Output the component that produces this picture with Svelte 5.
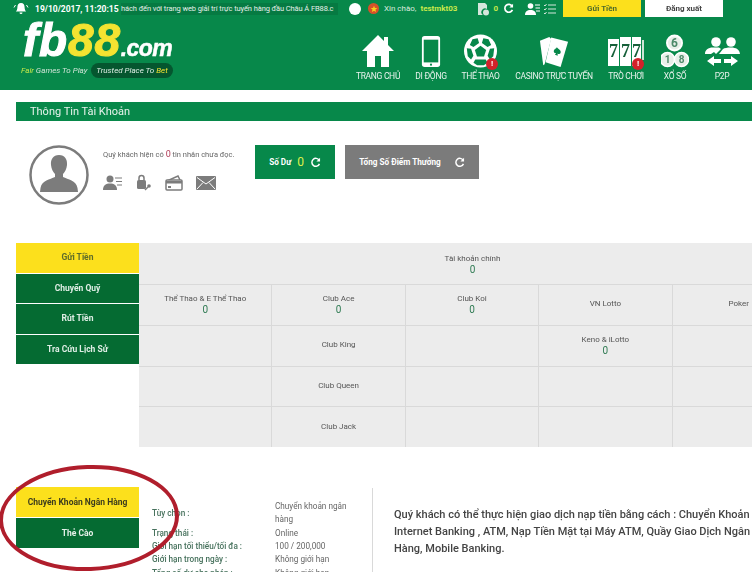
<script lang="ts">
  const nav = [
    { id: 'home', label: 'TRANG CHỦ', w: 46 },
    { id: 'phone', label: 'DI ĐỘNG', w: 32 },
    { id: 'ball', label: 'THỂ THAO', w: 39, alert: true },
    { id: 'cards', label: 'CASINO TRỰC TUYẾN', w: 80 },
    { id: 'slots', label: 'TRÒ CHƠI', w: 36, alert: true },
    { id: 'lotto', label: 'XỔ SỐ', w: 24 },
    { id: 'p2p', label: 'P2P', w: 16 },
  ]
  const sideTabs = ['Gửi Tiền', 'Chuyển Quỹ', 'Rút Tiền', 'Tra Cứu Lịch Sử']
  const cells = [
    { name: 'Thể Thao & E Thể Thao', val: '0' },
    { name: 'Club Ace', val: '0' },
    { name: 'Club Koi', val: '0' },
    { name: 'VN Lotto' },
    { name: 'Poker' },
    { name: '' },
    { name: 'Club King' },
    { name: '' },
    { name: 'Keno & iLotto', val: '0' },
    { name: '' },
    { name: '' },
    { name: 'Club Queen' },
    { name: '' },
    { name: '' },
    { name: '' },
    { name: '' },
    { name: 'Club Jack' },
    { name: '' },
    { name: '' },
    { name: '' },
  ]
  const details = [
    ['Tùy chọn :', 'Chuyển khoản ngân hàng'],
    ['Trạng thái :', 'Online'],
    ['Giới hạn tối thiểu/tối đa :', '100 / 200,000'],
    ['Giới hạn trong ngày :', 'Không giới hạn'],
    ['Tổng số dư cho phép :', 'Không giới hạn'],
  ]
</script>

<div class="page">
  <header class="header">
    <div class="topbar">
      <svg class="bell" viewBox="0 0 16 14" width="16" height="14">
        <path d="M8 1c-2.600 0-3.600 2-3.600 4.400 0 2-.8 3.200-1.600 4.200h10.400c-.8-1-1.600-2.200-1.600-4.200C11.600 3 10.600 1 8 1zM6.500 10.500a1.500 1.500 0 0 0 3 0z" fill="#fff"/>
        <path d="M2.500 3 1 5.500M13.500 3 15 5.500" stroke="#fff" fill="none"/>
      </svg>
      <span class="date">19/10/2017, 11:20:15</span>
      <div class="ticker">hách đến với trang web giải trí trực tuyến hàng đầu Châu Á FB88.c</div>
      <span class="dot"></span>
      <span class="flag"><svg viewBox="0 0 12 12" width="8" height="8"><path d="M6 1l1.400 3.400 3.600.2-2.800 2.300.9 3.500L6 8.500 2.900 10.400l.9-3.500L1 4.600l3.600-.2z" fill="#f7d21e"/></svg></span>
      <span class="hello">Xin chào,</span>
      <span class="user">testmkt03</span>
      <svg class="ic-coin" viewBox="0 0 12 14" width="12" height="14">
        <path d="M1 1h7l2 2v4a3.500 3.500 0 0 0-4 6H1z" fill="#d5e6dc"/>
        <circle cx="9" cy="10.500" r="3" fill="#d5e6dc"/>
      </svg>
      <span class="zero">0</span>
      <svg class="ic-refresh" viewBox="0 0 12 12" width="11" height="11">
        <path d="M10 3.500A4.300 4.300 0 1 0 10.300 7.500" fill="none" stroke="#fff" stroke-width="1.800"/>
        <path d="M11 .8v4H7z" fill="#fff"/>
      </svg>
      <svg class="ic-user" viewBox="0 0 15 12" width="15" height="12">
        <circle cx="5.500" cy="3" r="2.800" fill="#fff"/>
        <path d="M0 12c0-3.500 2-5 5.500-5s5.500 1.500 5.500 5z" fill="#fff"/>
        <path d="M10 2h5M10.500 5h4.500M11 8h4" stroke="#fff"/>
      </svg>
      <svg class="ic-list" viewBox="0 0 12 12" width="12" height="12">
        <path d="M0 2l1 1 1.500-2M0 6l1 1 1.500-2M0 10l1 1 1.500-2M4 2h8M4 6h8M4 10h8" stroke="#d5e6dc" fill="none"/>
      </svg>
      <button class="btn-deposit">Gửi Tiền</button>
      <button class="btn-logout">Đăng xuất</button>
    </div>

    <div class="mainbar">
      <div class="logo">
        <div class="wordmark"><span class="fb">fb</span><span class="eights">88</span><span class="com">.com</span></div>
        <div class="tagline">
          <span><b>Fair</b> Games To Play</span>
          <span class="pill">Trusted Place To <i>Bet</i></span>
        </div>
      </div>

      <nav class="nav">
        {#each nav as item}
          <div class="nav-item nav-{item.id}" style="width: {item.w}px">
            <div class="nav-icon">
              {#if item.id === 'home'}
                <svg viewBox="0 0 34 34" width="34" height="34">
                  <path d="M17 1 1 17h5v16h8V22h6v11h8V17h5l-6-6V3h-4v4z" fill="#fff"/>
                </svg>
              {:else if item.id === 'phone'}
                <svg viewBox="0 0 22 36" width="20" height="33">
                  <rect x="1" y="1" width="20" height="34" rx="3" fill="#fff"/>
                  <rect x="3" y="5" width="16" height="25" fill="#07884a"/>
                  <circle cx="11" cy="32.500" r="1.200" fill="#07884a"/>
                </svg>
              {:else if item.id === 'ball'}
                <svg viewBox="0 0 36 36" width="35" height="34">
                  <circle cx="18" cy="18" r="17.500" fill="#fff"/>
                  <path d="M18 12.500l6 4.400-2.300 7h-7.400l-2.300-7z" fill="#07884a"/>
                  <path d="M9.500 5.500 15 4.500l1.500 5-6 4.300-3.800-2.200zM26.500 5.500 21 4.500l-1.500 5 6 4.300 3.800-2.200z" fill="#07884a"/>
                  <path d="M3.500 15 8 15.500l2.500 7.500-2.500 4-3.500-3.500zM32.500 15 28 15.500 25.500 23l2.500 4 3.500-3.500z" fill="#07884a"/>
                  <path d="M12.500 27h11l2 3.500-4 2.500h-7l-4-2.500z" fill="#07884a"/>
                </svg>
              {:else if item.id === 'cards'}
                <svg viewBox="0 0 32 34" width="30" height="32">
                  <path d="M1 5 11 1l2 2-7 27-1.500 1z" fill="#fff"/>
                  <path d="M13 1.500 31 6l-8 27L7 28z" fill="#fff"/>
                  <path d="M19 12c2 2.500 5 3 4 6-.8 1.600-2.400 1.400-3.200.6l.2 2.400-3-1 1.200-2c-1.200.4-2.800-.6-2.400-2.400.6-2 2.600-1.800 3.200-3.600z" fill="#07884a"/>
                </svg>
              {:else if item.id === 'slots'}
                <svg viewBox="0 0 36 32" width="36" height="32">
                  <rect x="0" y="3" width="11" height="27" fill="#fff"/>
                  <rect x="12" y="1" width="11" height="29" fill="#fff"/>
                  <rect x="24" y="1" width="9" height="29" fill="#fff"/>
                  <rect x="34" y="4" width="2" height="20" fill="#cfe4d6"/>
                  <text x="5.500" y="21" class="seven">7</text>
                  <text x="17.500" y="21" class="seven">7</text>
                  <text x="28.500" y="21" class="seven">7</text>
                </svg>
              {:else if item.id === 'lotto'}
                <svg viewBox="0 0 28 34" width="28" height="34">
                  <circle cx="13.500" cy="9" r="8.500" fill="#fff"/>
                  <circle cx="13.500" cy="9" r="6.500" fill="#e8efe9"/>
                  <circle cx="6.500" cy="25.500" r="7" fill="#e8efe9" stroke="#fff" stroke-width="1.500"/>
                  <circle cx="20.500" cy="25.500" r="7" fill="#e8efe9" stroke="#fff" stroke-width="1.500"/>
                  <text x="13.500" y="13" class="ball-num big">6</text>
                  <text x="6.500" y="29" class="ball-num">1</text>
                  <text x="20.500" y="29" class="ball-num">8</text>
                </svg>
              {:else}
                <svg viewBox="0 0 36 31" width="36" height="31">
                  <circle cx="12" cy="5" r="4.800" fill="#fff"/>
                  <circle cx="27" cy="5" r="4.800" fill="#fff"/>
                  <path d="M1 17c0-4 3-6.500 8-6.500h6l2 1.500-5 5-2-2-3 2z" fill="#fff"/>
                  <path d="M19 12c1.500-1 4-1.500 8-1.500 5 0 8.500 2 9 6.500H15z" fill="#fff"/>
                  <path d="M10 19 3 24l7 5v-3h7v-4h-7zM27 19v3h-7v4h7v3l7-5z" fill="#fff"/>
                </svg>
              {/if}
              {#if item.alert}<span class="alert">!</span>{/if}
            </div>
            <span class="nav-label">{item.label}</span>
          </div>
        {/each}
      </nav>
    </div>
  </header>

  <h1 class="title">Thông Tin Tài Khoản</h1>

  <section class="profile">
    <svg class="avatar" viewBox="0 0 60 60" width="60" height="60">
      <circle cx="30" cy="30" r="28.500" fill="#fff" stroke="#7c7c7c" stroke-width="2.500"/>
      <path d="M30 10c-6 0-8.500 4.500-8 10 .4 4 2 7 4 9v3c-5 2.500-13 3-14.500 11l-.5 4h38l-.5-4C47 35 39 34.500 34 32v-3c2-2 3.600-5 4-9 .5-5.500-2-10-8-10z" fill="#7c7c7c"/>
    </svg>

    <div class="messages">
      <p class="unread">Quý khách hiện có <span class="count">0</span> tin nhắn chưa đọc.</p>
      <div class="tools">
        <svg viewBox="0 0 20 16" width="20" height="16">
          <circle cx="7" cy="4" r="3.500" fill="#7c7c7c"/>
          <path d="M0 15c0-5 3-6.500 7-6.500s7 1.500 7 6.500z" fill="#7c7c7c"/>
          <path d="M12 3h7M13 6.500h6M14 10h5" stroke="#7c7c7c" stroke-width="1.200"/>
        </svg>
        <svg viewBox="0 0 16 17" width="16" height="17">
          <rect x="1" y="6" width="9" height="9" rx="1.500" fill="#7c7c7c"/>
          <path d="M3 6V4a2.500 2.500 0 0 1 5 0v2" fill="none" stroke="#7c7c7c" stroke-width="1.500"/>
          <circle cx="13" cy="12" r="1.800" fill="#7c7c7c"/>
          <path d="M12 13l-3 3" stroke="#7c7c7c" stroke-width="1.500"/>
        </svg>
        <svg viewBox="0 0 18 16" width="18" height="16">
          <path d="M2 6 13 1l2 4" fill="none" stroke="#7c7c7c" stroke-width="1.500"/>
          <rect x="1" y="5" width="16" height="10" rx="1" fill="#fff" stroke="#7c7c7c" stroke-width="1.500"/>
          <rect x="1" y="6" width="16" height="2.500" fill="#7c7c7c"/>
          <rect x="3" y="11" width="3" height="2" fill="#7c7c7c"/>
        </svg>
        <svg viewBox="0 0 20 14" width="20" height="14">
          <rect width="20" height="14" rx="1" fill="#7c7c7c"/>
          <path d="M1 1.500 10 8l9-6.500M1 13l6-6.500M19 13l-6-6.500" fill="none" stroke="#fff" stroke-width="1"/>
        </svg>
      </div>
    </div>

    <div class="balance">
      <span>Số Dư</span>
      <span class="balance-val">0</span>
      <svg viewBox="0 0 12 12" width="11" height="11">
        <path d="M10 3.500A4.300 4.300 0 1 0 10.300 7.500" fill="none" stroke="#fff" stroke-width="1.600"/>
        <path d="M11 .8v4H7z" fill="#fff"/>
      </svg>
    </div>
    <div class="points">
      <span>Tổng Số Điểm Thưởng</span>
      <svg viewBox="0 0 12 12" width="11" height="11">
        <path d="M10 3.500A4.300 4.300 0 1 0 10.300 7.500" fill="none" stroke="#fff" stroke-width="1.600"/>
        <path d="M11 .8v4H7z" fill="#fff"/>
      </svg>
    </div>
  </section>

  <section class="wallet">
    <div class="side">
      {#each sideTabs as tab, i}
        <div class="side-tab" class:active={i === 0}>{tab}</div>
      {/each}
    </div>
    <div class="accounts">
      <div class="main-account">
        <span>Tài khoản chính</span>
        <span class="val">0</span>
      </div>
      <div class="grid">
        {#each cells as cell}
          <div class="cell">
            {#if cell.name}<span>{cell.name}</span>{/if}
            {#if cell.val}<span class="val">{cell.val}</span>{/if}
          </div>
        {/each}
      </div>
    </div>
  </section>

  <section class="deposit">
    <div class="methods">
      <div class="method active">Chuyển Khoản Ngân Hàng</div>
      <div class="method">Thẻ Cào</div>
    </div>
    <div class="details">
      {#each details as row}
        <span class="d-label">{row[0]}</span>
        <span class="d-value">{row[1]}</span>
      {/each}
    </div>
    <p class="note">Quý khách có thể thực hiện giao dịch nạp tiền bằng cách : Chuyển Khoản Internet Banking , ATM, Nạp Tiền Mặt tại Máy ATM, Quầy Giao Dịch Ngân Hàng, Mobile Banking.</p>

    <svg class="ring" viewBox="0 0 190 120" width="190" height="120">
      <ellipse cx="97" cy="58" rx="88" ry="51" transform="rotate(-2 97 58)" fill="none" stroke="#b01e2c" stroke-width="4"/>
    </svg>
  </section>
</div>

<style>
  :global(body) {
    margin: 0;
    background: #fff;
  }

  .page {
    position: relative;
    width: 752px;
    height: 572px;
    overflow: hidden;
    font-family: Roboto, "Liberation Sans", sans-serif;
    color: #555;
    /* the source capture is a soft jpeg */
    filter: blur(0.35px);
  }

  /* Header */
  .header {
    height: 90px;
    background: #07884a;
    color: #fff;
  }

  .topbar {
    display: flex;
    align-items: center;
    height: 17px;
    padding-left: 13px;
    font-size: 8px;
    white-space: nowrap;
  }

  .date {
    margin-left: 6px;
    width: 86px;
    font-weight: 700;
    font-size: 8.500px;
  }

  .ticker {
    width: 217px;
    height: 12px;
    line-height: 12px;
    overflow: hidden;
    background: #067a42;
    font-size: 7.500px;
    letter-spacing: -0.1px;
    color: #e4f0e8;
  }

  .dot {
    width: 12px;
    height: 12px;
    margin-left: 11px;
    border-radius: 50%;
    background: #fff;
  }

  .flag {
    display: flex;
    align-items: center;
    justify-content: center;
    width: 11px;
    height: 11px;
    margin-left: 7px;
    border-radius: 50%;
    background: #d4512a;
  }

  .hello {
    margin-left: 5px;
    font-size: 8px;
    color: #d8eadf;
  }

  .user {
    margin-left: 4px;
    font-weight: 700;
    color: #c8e84a;
  }

  .ic-coin {
    margin-left: 20px;
  }

  .zero {
    margin-left: 4px;
    color: #c8e84a;
    font-weight: 700;
  }

  .ic-refresh {
    margin-left: 5px;
  }

  .ic-user {
    margin-left: 11px;
  }

  .ic-list {
    margin-left: 4px;
  }

  .btn-deposit,
  .btn-logout {
    width: 78px;
    height: 17px;
    padding: 0;
    border: 0;
    font: 700 8px Roboto, sans-serif;
    color: #444;
  }

  .btn-deposit {
    margin-left: 7px;
    background: #fce01c;
    color: #4f6b2a;
  }

  .btn-logout {
    margin-left: 4px;
    background: #fff;
  }

  .mainbar {
    display: flex;
    justify-content: space-between;
    height: 73px;
  }

  /* Logo */
  .logo {
    padding: 0 0 0 21px;
  }

  .wordmark {
    display: flex;
    align-items: baseline;
    height: 46px;
    padding-left: 2px;
    font-family: "Liberation Sans", Arial, sans-serif;
    font-style: italic;
    font-weight: 700;
    line-height: 46px;
    -webkit-text-stroke: 1.100px currentColor;
  }

  .fb {
    font-size: 46px;
    letter-spacing: 0.8px;
  }

  .eights {
    font-size: 46px;
    letter-spacing: 0.8px;
    color: #f4e331;
  }

  .com {
    font-size: 23px;
    letter-spacing: -0.6px;
    -webkit-text-stroke: 0.5px currentColor;
  }

  .tagline {
    display: flex;
    align-items: center;
    gap: 4px;
    font-size: 8px;
    font-style: italic;
    color: #cfe4d6;
  }

  .tagline b {
    font-weight: 400;
    color: #c8e84a;
  }

  .pill {
    padding: 3px 5px;
    border-radius: 8px;
    background: #05562f;
    color: #dfeee5;
  }

  .pill i {
    color: #f4e331;
  }

  /* Nav */
  .nav {
    display: flex;
    gap: 14px;
    padding: 0 22px 0 0;
  }

  .nav-item {
    display: flex;
    flex-direction: column;
    align-items: center;
    flex-shrink: 0;
  }

  .nav-lotto {
    margin-left: 5px;
  }

  .nav-p2p {
    margin-left: 13px;
  }

  .nav-icon {
    position: relative;
    display: flex;
    align-items: flex-end;
    justify-content: center;
    box-sizing: border-box;
    height: 53px;
    padding-bottom: 2px;
  }

  .nav-label {
    font-size: 8.500px;
    line-height: 12px;
    letter-spacing: -0.3px;
    white-space: nowrap;
    color: #e9f3ed;
  }

  .alert {
    position: absolute;
    right: 0;
    bottom: 0;
    width: 12px;
    height: 12px;
    border-radius: 50%;
    background: #d2222a;
    font-size: 8px;
    font-weight: 700;
    line-height: 12px;
    text-align: center;
    color: #fff;
  }

  .seven {
    font: 700 18px "Liberation Serif", serif;
    text-anchor: middle;
    fill: #17603a;
  }

  .ball-num {
    font: 700 10px Roboto, sans-serif;
    text-anchor: middle;
    fill: #4d8a6a;
  }

  .ball-num.big {
    font-size: 12px;
  }

  /* Title */
  .title {
    height: 19px;
    margin: 12px 0 0 16px;
    padding-left: 14px;
    background: #07884a;
    font-size: 11px;
    font-weight: 400;
    line-height: 19px;
    color: #e8f3ec;
  }

  /* Profile */
  .profile {
    display: flex;
    align-items: flex-start;
    height: 122px;
    padding-left: 29px;
  }

  .avatar {
    margin-top: 24px;
  }

  .messages {
    width: 152px;
    margin-left: 14px;
  }

  .unread {
    margin: 28px 0 0;
    font-size: 7.500px;
    line-height: 10px;
    color: #666;
  }

  .count {
    font-size: 9px;
    color: #b03a55;
  }

  .tools {
    display: flex;
    align-items: center;
    gap: 13px;
    margin-top: 14px;
  }

  .balance,
  .points {
    display: flex;
    align-items: center;
    justify-content: center;
    height: 34px;
    margin-top: 24px;
    font-size: 8.200px;
    font-weight: 700;
    color: #fff;
  }

  .balance {
    gap: 6px;
    width: 80px;
    background: #07884a;
  }

  .balance-val {
    font-size: 12px;
    font-weight: 400;
    color: #dff04a;
  }

  .points {
    gap: 13px;
    width: 134px;
    margin-left: 10px;
    background: #7b7b7b;
  }

  /* Wallet table */
  .wallet {
    display: flex;
    align-items: flex-start;
    padding-left: 16px;
  }

  .side {
    display: flex;
    flex-direction: column;
    gap: 1px;
    flex: 0 0 123px;
  }

  .side-tab {
    height: 29.500px;
    background: #056b32;
    font-size: 8.500px;
    font-weight: 700;
    line-height: 29px;
    text-align: center;
    color: #dfeee5;
  }

  .side-tab.active {
    background: #fce01c;
    color: #5d6b2a;
  }

  .accounts {
    flex: 0 0 667px;
    background: #ececec;
  }

  .main-account {
    display: flex;
    flex-direction: column;
    align-items: center;
    justify-content: center;
    height: 41px;
    font-size: 8px;
    line-height: 11px;
  }

  .val {
    font-size: 10px;
    color: #2e7a52;
  }

  .grid {
    display: grid;
    grid-template-columns: repeat(5, 133.400px);
    grid-auto-rows: 40.800px;
  }

  .cell {
    display: flex;
    flex-direction: column;
    align-items: center;
    justify-content: center;
    box-sizing: border-box;
    padding-bottom: 2px;
    border-top: 1px solid #d9d9d9;
    border-right: 1px solid #d9d9d9;
    font-size: 8px;
    line-height: 11px;
  }

  /* Deposit */
  .deposit {
    position: relative;
    display: flex;
    align-items: flex-start;
    margin-top: 40px;
    padding-left: 16px;
  }

  .methods {
    flex: 0 0 123px;
  }

  .method {
    height: 30px;
    margin-bottom: 1px;
    background: #056b32;
    font-size: 8.500px;
    font-weight: 700;
    line-height: 30px;
    text-align: center;
    color: #e4f0e8;
  }

  .method.active {
    background: #fce01c;
    color: #3c3c1e;
  }

  .details {
    display: grid;
    grid-template-columns: 123px 75px;
    align-content: start;
    align-items: center;
    flex: 0 0 233px;
    box-sizing: border-box;
    padding: 13px 0 0 13px;
    font-size: 8.200px;
    line-height: 13.300px;
  }

  .d-label {
    font-weight: 500;
    color: #47725d;
  }

  .d-value {
    color: #666;
  }

  .note {
    flex: 0 0 384px;
    box-sizing: border-box;
    height: 90px;
    margin: 1px 0 0;
    padding: 18px 0 0 21px;
    border-left: 1px solid #d9d9d9;
    font-size: 11px;
    font-weight: 500;
    line-height: 17px;
    color: #444;
  }

  .ring {
    position: absolute;
    left: -8px;
    top: -27px;
  }
</style>
